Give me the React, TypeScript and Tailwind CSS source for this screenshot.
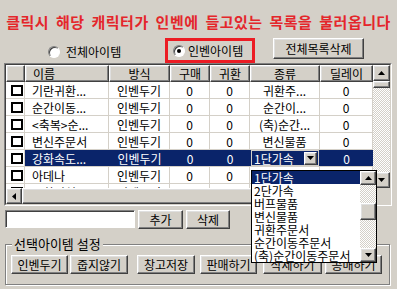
import React from 'react';

const raised =
    "bg-[#d4d0c8] border border-t-white border-l-white border-r-[#404040] border-b-[#404040] shadow-[inset_-1px_-1px_0_#808080,inset_1px_1px_0_#dfdfdf]";
const checker =
    "bg-[image:repeating-conic-gradient(#ffffff_0%_25%,#d4d0c8_0%_50%)] bg-[length:2px_2px]";

const cols = ["w-[19px]", "w-[84px]", "w-[61px]", "w-[40px]", "w-[40px]", "w-[70px]", "w-[53px]"];

const rows = [
    { name: "기란귀환...", kind: "귀환주..." },
    { name: "순간이동...", kind: "순간이..." },
    { name: "<축복>순...", kind: "(축)순간..." },
    { name: "변신주문서", kind: "변신물품" },
    { name: "강화속도...", kind: "1단가속", selected: true },
    { name: "아데나", kind: "" },
    { name: "몽환의섬...", kind: "" },
];

const kinds = ["1단가속", "2단가속", "버프물품", "변신물품", "귀환주문서", "순간이동주문서", "(축)순간이동주문서"];

const bottomButtons = [
    { label: "인벤두기", cls: "ml-[5px] w-[57px]" },
    { label: "줍지않기", cls: "ml-[2px] w-[58px]" },
    { label: "창고저장", cls: "ml-[9px] w-[58px]" },
    { label: "판매하기", cls: "ml-[5px] w-[57px]" },
    { label: "삭제하기", cls: "ml-[6px] w-[59px]" },
    { label: "공매하기", cls: "ml-[3px] w-[57px]" },
];

function Tri({ dir }: { dir: 'up' | 'down' | 'left' }) {
    if (dir === 'left') {
        return (
            <svg width="4" height="7" viewBox="0 0 4 7">
                <polygon points="0,3.5 4,0 4,7" fill="#000" />
            </svg>
        );
    }
    return (
        <svg width="7" height="4" viewBox="0 0 7 4">
            <polygon points={dir === 'up' ? "3.5,0 7,4 0,4" : "0,0 7,0 3.5,4"} fill="#000" />
        </svg>
    );
}

function Radio({ checked }: { checked?: boolean }) {
    return (
        <span className="w-[12px] h-[12px] shrink-0 rounded-full bg-white border border-t-[#808080] border-l-[#808080] border-r-white border-b-white shadow-[inset_1px_1px_0_#404040] flex items-center justify-center">
            {checked && <span className="w-[4px] h-[4px] rounded-full bg-black" />}
        </span>
    );
}

const App = () => {
    return (
        <div className="relative w-[397px] h-[289px] overflow-hidden bg-[#d4d0c8] font-['Noto_Sans_CJK_KR',sans-serif] text-black flex flex-col">
            {/* title */}
            <div className="h-[38px] pt-[13px] text-center text-[15px] leading-[18px] font-bold text-[#e4262b] whitespace-nowrap tracking-[0.5px] [word-spacing:3px]">
                클릭시 해당 캐릭터가 인벤에 들고있는 목록을 불러옵니다
            </div>

            {/* radio row */}
            <div className="h-[25px] flex items-start text-[12px] leading-[13px]">
                <div className="ml-[48px] w-[117px] mt-[7px] flex items-center gap-[6px]">
                    <Radio />
                    <span>전체아이템</span>
                </div>
                <div className="w-[90px] h-[25px] border-[3px] border-[#ec1c24] flex items-center pl-[5px] gap-[3px]">
                    <Radio checked />
                    <span>인벤아이템</span>
                </div>
                <button className={`${raised} ml-[18px] w-[91px] h-[21px] flex items-center justify-center`}>
                    전체목록삭제
                </button>
            </div>

            {/* list view */}
            <div className="ml-[4px] w-[388px] h-[143px] border border-t-[#808080] border-l-[#808080] border-r-white border-b-white">
                <div className="w-full h-full border border-t-[#404040] border-l-[#404040] border-r-[#d4d0c8] border-b-[#d4d0c8] flex flex-col">
                    <div className="flex h-[123px]">
                        <div className="w-[367px] h-full bg-white overflow-hidden text-[12px] leading-[13px]">
                            <div className="flex h-[17px]">
                                {["", "이름", "방식", "구매", "귀환", "종류", "딜레이"].map((h, i) => (
                                    <div
                                        key={i}
                                        className={`${raised} ${cols[i]} shrink-0 h-full flex items-center ${i === 1 ? "pl-[7px]" : "justify-center"}`}
                                    >
                                        {h}
                                    </div>
                                ))}
                            </div>
                            {rows.map((r, idx) => {
                                const sel = r.selected;
                                const cell = `shrink-0 h-full flex items-center border-b border-[#d4d0c8] ${sel ? "bg-[#0a246a] text-white" : "border-r"}`;
                                return (
                                    <div key={idx} className="flex h-[17px]">
                                        <div className={`${cols[0]} shrink-0 h-full flex items-center justify-end pr-[1px] border-r border-b border-[#d4d0c8] bg-white`}>
                                            <span className="w-[12px] h-[11px] border-2 border-black bg-white" />
                                        </div>
                                        <div className={`${cols[1]} ${cell} pl-[7px] whitespace-nowrap`}>{r.name}</div>
                                        <div className={`${cols[2]} ${cell} justify-center`}>인벤두기</div>
                                        <div className={`${cols[3]} ${cell} justify-center`}>0</div>
                                        <div className={`${cols[4]} ${cell} justify-center`}>0</div>
                                        <div className={`${cols[5]} ${cell} justify-center whitespace-nowrap`}>
                                            {sel ? (
                                                <div className="w-[68px] h-[16px] border border-[#d4d0c8] bg-[#0a246a] flex items-center">
                                                    <span className="flex-1 pl-[2px]">{r.kind}</span>
                                                    <span className={`${raised} w-[13px] h-[13px] mr-[1px] flex items-center justify-center`}>
                                                        <Tri dir="down" />
                                                    </span>
                                                </div>
                                            ) : (
                                                r.kind
                                            )}
                                        </div>
                                        <div className={`${cols[6]} ${cell} justify-center`}>0</div>
                                    </div>
                                );
                            })}
                        </div>
                        {/* vertical scrollbar */}
                        <div className="w-[17px] h-full flex flex-col">
                            <div className={`${raised} h-[16px] flex items-center justify-center`}>
                                <Tri dir="up" />
                            </div>
                            <div className={`${raised} h-[7px]`} />
                            <div className={`${checker} flex-1`} />
                            <div className={`${raised} h-[16px] flex items-center justify-center`}>
                                <Tri dir="down" />
                            </div>
                        </div>
                    </div>
                    {/* horizontal scrollbar */}
                    <div className="flex h-[16px]">
                        <div className="w-[367px] h-full flex">
                            <div className={`${raised} w-[16px] h-full flex items-center justify-center`}>
                                <Tri dir="left" />
                            </div>
                            <div className={`${raised} flex-1 h-full`} />
                            <div className={`${raised} w-[16px] h-full`} />
                        </div>
                        <div className="w-[17px] h-full bg-[#d4d0c8]" />
                    </div>
                </div>
            </div>

            {/* input row */}
            <div className="mt-[4px] h-[19px] flex text-[12px] leading-[13px]">
                <input
                    type="text"
                    className="ml-[5px] w-[130px] h-[18px] bg-white border border-t-[#808080] border-l-[#808080] border-r-white border-b-white shadow-[inset_1px_1px_0_#404040] outline-none"
                />
                <button className={`${raised} ml-[3px] w-[45px] h-[19px] flex items-center justify-center`}>추가</button>
                <button className={`${raised} ml-[3px] w-[44px] h-[19px] flex items-center justify-center`}>삭제</button>
            </div>

            {/* group box */}
            <fieldset className="mt-[8px] ml-[5px] w-[385px] border border-[#808080] shadow-[inset_1px_1px_0_#ffffff,1px_1px_0_#ffffff] pb-[10px]">
                <legend className="ml-[6px] px-[2px] bg-[#d4d0c8] text-[13px] leading-[14px]">선택아이템 설정</legend>
                <div className="mt-[4px] flex text-[12px] leading-[13px]">
                    {bottomButtons.map((b) => (
                        <button key={b.label} className={`${raised} ${b.cls} h-[19px] flex items-center justify-center`}>
                            {b.label}
                        </button>
                    ))}
                </div>
            </fieldset>

            {/* open dropdown of the 종류 combo */}
            <div className="absolute left-[251px] top-[170px] w-[126px] h-[93px] border border-black bg-white flex text-[12px] leading-[13px]">
                <div className="flex-1 flex flex-col">
                    {kinds.map((k, i) => (
                        <div key={k} className={`h-[13px] pl-[2px] whitespace-nowrap ${i === 0 ? "bg-[#0a246a] text-white" : ""}`}>
                            {k}
                        </div>
                    ))}
                </div>
                <div className="w-[16px] h-full flex flex-col">
                    <div className={`${raised} h-[14px] flex items-center justify-center`}>
                        <Tri dir="up" />
                    </div>
                    <div className={`${checker} h-[18px]`} />
                    <div className={`${raised} h-[17px]`} />
                    <div className={`${checker} flex-1`} />
                    <div className={`${raised} h-[14px] flex items-center justify-center`}>
                        <Tri dir="down" />
                    </div>
                </div>
            </div>
        </div>
    );
};

export default App;
